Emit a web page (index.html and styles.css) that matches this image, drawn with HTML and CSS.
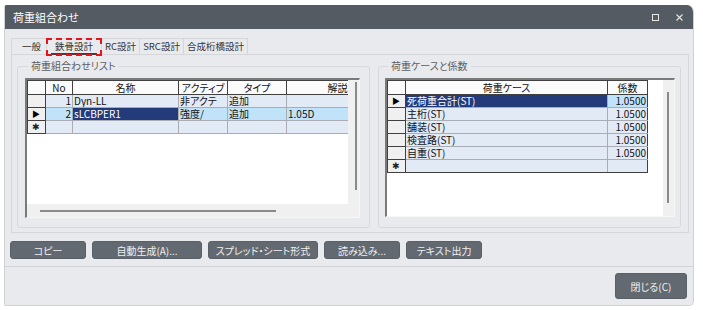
FILE: index.html
```html
<!DOCTYPE html>
<html lang="ja">
<head>
  <meta charset="UTF-8" />
  <title>荷重組合わせ</title>
  <link rel="stylesheet" href="styles.css">
</head>
<body>
  <div class="window">
    <div class="titlebar">
      <span class="title">荷重組合わせ</span>
      <div class="controls">
        <span class="ctl-max"></span>
        <svg class="ctl-close" width="7" height="7" viewBox="0 0 7 7"><path d="M0.5 0.5L6.5 6.5M6.5 0.5L0.5 6.5" /></svg>
      </div>
    </div>
    <div class="content">
      <div class="tabs">
        <div class="tab">一般</div>
        <div class="tab active"><span>鉄骨設計</span></div>
        <div class="tab">RC設計</div>
        <div class="tab">SRC設計</div>
        <div class="tab">合成桁橋設計</div>
      </div>
      <div class="panel">
        <fieldset class="group group-list">
          <legend>荷重組合わせリスト</legend>
          <div class="grid">
            <div class="view">
              <table class="sheet sheet-list">
                <colgroup>
                  <col style="width:18px"><col style="width:27px"><col style="width:106px"><col style="width:49px"><col style="width:59px"><col style="width:102px">
                </colgroup>
                <tr><th></th><th>No</th><th>名称</th><th>アクティブ</th><th>タイプ</th><th>解説</th></tr>
                <tr><td class="rh"></td><td class="num">1</td><td>Dyn-LL</td><td>非アクテ</td><td>追加</td><td></td></tr>
                <tr class="sel"><td class="rh"><span class="mark">&#9654;</span></td><td class="num">2</td><td class="cur">sLCBPER1</td><td>強度/</td><td>追加</td><td>1.05D</td></tr>
                <tr><td class="rh"><span class="star">&#10033;</span></td><td></td><td></td><td></td><td></td><td></td></tr>
              </table>
            </div>
            <div class="vscroll"><div class="thumb thumb-list"></div></div>
            <div class="hscroll"><div class="thumb"></div></div>
            <div class="corner"></div>
          </div>
        </fieldset>
        <fieldset class="group group-case">
          <legend>荷重ケースと係数</legend>
          <div class="grid grid-noh">
            <div class="view">
              <table class="sheet sheet-case">
                <colgroup>
                  <col style="width:18px"><col style="width:202px"><col style="width:40px">
                </colgroup>
                <tr><th></th><th>荷重ケース</th><th>係数</th></tr>
                <tr class="sel"><td class="rh"><span class="mark">&#9654;</span></td><td class="cur">死荷重合計(ST)</td><td class="num">1.0500</td></tr>
                <tr><td class="rh"></td><td>主桁(ST)</td><td class="num">1.0500</td></tr>
                <tr><td class="rh"></td><td>舗装(ST)</td><td class="num">1.0500</td></tr>
                <tr><td class="rh"></td><td>検査路(ST)</td><td class="num">1.0500</td></tr>
                <tr><td class="rh"></td><td>自重(ST)</td><td class="num">1.0500</td></tr>
                <tr><td class="rh"><span class="star">&#10033;</span></td><td></td><td></td></tr>
              </table>
            </div>
            <div class="vscroll"><div class="thumb thumb-case"></div></div>
          </div>
        </fieldset>
      </div>
      <div class="actions">
        <button class="btn">コピー</button>
        <button class="btn btn-wide">自動生成(A)...</button>
        <button class="btn btn-wide">スプレッド・シート形式</button>
        <button class="btn">読み込み...</button>
        <button class="btn">テキスト出力</button>
      </div>
    </div>
    <div class="footer">
      <button class="btn btn-close">閉じる(C)</button>
    </div>
  </div>
</body>
</html>
```

FILE: styles.css
```css
* { box-sizing: border-box; }
html, body { margin: 0; }
body {
  background: #fff;
  font-family: "Noto Sans CJK JP", "Noto Sans", sans-serif;
  font-size: 10px;
  font-feature-settings: "palt";
  color: #222;
}
.window {
  margin: 5px 0 0 4px;
  width: 690px;
  height: 301px;
  display: flex;
  flex-direction: column;
  background: #e9eaed;
  border: 1px solid #cfd1d5;
  border-top: none;
  border-radius: 2px 7px 5px 2px;
  overflow: hidden;
}
.titlebar {
  height: 24px;
  flex: none;
  display: flex;
  align-items: center;
  justify-content: space-between;
  padding: 0 10px 0 8px;
  background: #555b63;
  color: #fff;
}
.title { font-size: 11px; }
.controls {
  display: flex;
  align-items: center;
  gap: 17px;
}
.ctl-max {
  width: 7px;
  height: 7px;
  border: 1px solid #e6e7e9;
}
.ctl-close { stroke: #e6e7e9; stroke-width: 1.1; fill: none; }

.content {
  flex: 1;
  padding: 9px 4px 0 6px;
  display: flex;
  flex-direction: column;
}
.tabs {
  display: flex;
  height: 16px;
  align-items: flex-start;
}
.tab {
  height: 16px;
  line-height: 15px;
  padding: 0 3px;
  margin-right: -1px;
  border: 1px solid #d4d6d9;
  border-bottom: none;
  color: #333;
  font-size: 9.5px;
  white-space: nowrap;
}
.tab:first-child { padding: 0 5px 0 10px; }
.tab.active {
  position: relative;
  z-index: 1;
  height: 18px;
  padding: 0 2px;
  outline: 2px dashed #e3141c;
  outline-offset: -2px;
  background: #e9eaed;
}
.tab.active span {
  display: block;
  margin: 1px 2px 0;
  padding: 0 4px;
  line-height: 13px;
  border-bottom: 2px solid #3b3e42;
}
.panel {
  height: 179px;
  display: flex;
  gap: 8px;
  padding: 4px 7px 4px 5px;
  border: 1px solid #d4d6d9;
}
.group {
  margin: 0;
  min-width: 0;
  display: flex;
  flex-direction: column;
  border: 1px solid #d6d8db;
  border-radius: 3px;
}
.group legend {
  margin-left: 3px;
  padding: 0 3px;
  line-height: 14px;
  color: #5d6065;
}
.group-list { flex: 0 0 353px; padding: 5px 9px 9px 7px; }
.group-case { flex: 1; padding: 5px 5px 10px 6px; }

.grid {
  flex: 1;
  min-height: 0;
  display: grid;
  grid-template-columns: 1fr 11px;
  grid-template-rows: 1fr 13px;
  background: #f0f0f0;
  border-style: solid;
  border-width: 2px 1px 1px 2px;
  border-color: #7a7a7a #f7f7f7 #f7f7f7 #7a7a7a;
}
.grid-noh { grid-template-rows: 1fr; }
.view {
  background: #fff;
  overflow: hidden;
}
.vscroll .thumb {
  width: 2px;
  background: #8a8a8a;
}
.thumb-list { margin: 2px 0 0 7px; height: 108px; }
.thumb-case { margin: 12px 0 0 4px; height: 111px; }
.hscroll .thumb {
  height: 2px;
  width: 236px;
  margin: 6px 0 0 13px;
  background: #8a8a8a;
}

.sheet {
  border-collapse: collapse;
  table-layout: fixed;
  color: #111;
}
.sheet-list { width: 361px; }
.sheet-case { width: 260px; }
.sheet th {
  height: 14px;
  padding: 0;
  font-weight: normal;
  line-height: 12px;
  background: #fbfbfb;
  border: 1px solid #404040;
  white-space: nowrap;
  overflow: hidden;
}
.sheet td {
  height: 12px;
  padding: 0 1px;
  line-height: 12px;
  background: #e2eaf6;
  border: 1px solid #a9adb3;
  white-space: nowrap;
  overflow: hidden;
}
.sheet td.rh {
  background: #f0f0f0;
  border-color: #404040;
  padding: 0 0 0 4px;
  font-size: 8px;
}
.sheet td.num { text-align: right; }
.sheet tr.sel td { background: #c1e3fa; }
.sheet tr.sel td.rh { background: #f0f0f0; }
.sheet tr.sel td.cur { background: #233a7b; color: #fff; }
.sheet-case td:last-child, .sheet-case th:last-child { border-right-color: #404040; }
.sheet-case tr:last-child td { border-bottom-color: #404040; }
.mark { font-size: 8px; color: #000; }
.star { font-size: 9px; color: #222; }

.actions {
  display: flex;
  gap: 6px;
  margin: 8px 0 0 -1px;
}
.btn {
  height: 18px;
  width: 76px;
  padding: 0;
  border: 1px solid #5a6068;
  border-radius: 3px;
  background: #636970;
  color: #eef0f2;
  font-family: inherit;
  font-size: 10px;
  font-feature-settings: "palt";
}
.btn-wide { width: 110px; }
.footer {
  margin-top: 7px;
  border-top: 1px solid #d2d4d7;
  padding: 6px 6px 6px 0;
  display: flex;
  justify-content: flex-end;
}
.btn-close {
  width: 72px;
  height: 26px;
}
```
